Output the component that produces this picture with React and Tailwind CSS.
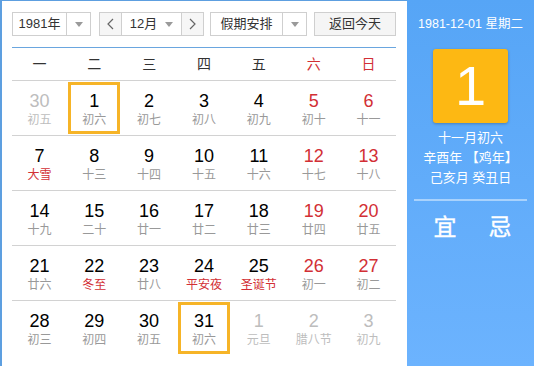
import React from 'react';

const weekdays = ['一', '二', '三', '四', '五', '六', '日'];

// o: 非本月, f: 节日/节气, s: 选中
const weeks = [
  [{ d: 30, l: '初五', o: true }, { d: 1, l: '初六', s: true }, { d: 2, l: '初七' }, { d: 3, l: '初八' }, { d: 4, l: '初九' }, { d: 5, l: '初十' }, { d: 6, l: '十一' }],
  [{ d: 7, l: '大雪', f: true }, { d: 8, l: '十三' }, { d: 9, l: '十四' }, { d: 10, l: '十五' }, { d: 11, l: '十六' }, { d: 12, l: '十七' }, { d: 13, l: '十八' }],
  [{ d: 14, l: '十九' }, { d: 15, l: '二十' }, { d: 16, l: '廿一' }, { d: 17, l: '廿二' }, { d: 18, l: '廿三' }, { d: 19, l: '廿四' }, { d: 20, l: '廿五' }],
  [{ d: 21, l: '廿六' }, { d: 22, l: '冬至', f: true }, { d: 23, l: '廿八' }, { d: 24, l: '平安夜', f: true }, { d: 25, l: '圣诞节', f: true }, { d: 26, l: '初一' }, { d: 27, l: '初二' }],
  [{ d: 28, l: '初三' }, { d: 29, l: '初四' }, { d: 30, l: '初五' }, { d: 31, l: '初六', s: true }, { d: 1, l: '元旦', o: true }, { d: 2, l: '腊八节', o: true }, { d: 3, l: '初九', o: true }],
];

const Caret = () => (
  <svg width="8" height="5" viewBox="0 0 8 5"><path d="M0 0h8L4 5z" fill="#9a9a9a" /></svg>
);

const Chevron = ({ dir }) => (
  <svg width="7" height="12" viewBox="0 0 7 12">
    <polyline points={dir === 'left' ? '6,1 1,6 6,11' : '1,1 6,6 1,11'} fill="none" stroke="#666" strokeWidth="1.2" />
  </svg>
);

export default function App() {
  return (
    <div className="flex w-[534px] h-[366px] overflow-hidden bg-white font-['Liberation_Sans','Noto_Sans_CJK_SC',sans-serif]">
      {/* 左侧日历 */}
      <div className="w-[407px] h-full border-l-2 border-t border-[#5d9fe0] pl-[10px] pr-[11px] pt-[11px]">
        <div className="flex items-center h-[24px] text-[13px] text-[#333]">
          <div className="flex h-full w-[79px] border border-[#cfcfcf] bg-white">
            <div className="flex-1 flex items-center justify-center">1981年</div>
            <div className="w-[24px] border-l border-[#cfcfcf] flex items-center justify-center"><Caret /></div>
          </div>
          <div className="flex h-full w-[105px] ml-[8px] border border-[#cfcfcf] bg-white">
            <div className="w-[22px] bg-[#f6f6f6] border-r border-[#cfcfcf] flex items-center justify-center"><Chevron dir="left" /></div>
            <div className="flex-1 flex items-center justify-center gap-[8px]">12月<Caret /></div>
            <div className="w-[22px] bg-[#f6f6f6] border-l border-[#cfcfcf] flex items-center justify-center"><Chevron dir="right" /></div>
          </div>
          <div className="flex h-full w-[97px] ml-[6px] border border-[#cfcfcf] bg-white">
            <div className="flex-1 flex items-center justify-center">假期安排</div>
            <div className="w-[24px] border-l border-[#cfcfcf] flex items-center justify-center"><Caret /></div>
          </div>
          <div className="h-full w-[82px] ml-auto border border-[#cfcfcf] bg-[#f5f5f5] flex items-center justify-center">返回今天</div>
        </div>

        <div className="mt-[11px] h-[1px] bg-[#6aa6df]" />

        <div className="grid grid-cols-7 h-[33px] border-b border-[#d2d2d2] text-[14px] items-center text-center">
          {weekdays.map((w, i) => (
            <div key={w} className={i >= 5 ? 'text-[#d22f35]' : 'text-[#333]'}>{w}</div>
          ))}
        </div>

        {weeks.map((week, r) => (
          <div key={r} className={`grid grid-cols-7 h-[55px] ${r < weeks.length - 1 ? 'border-b border-[#d2d2d2]' : ''}`}>
            {week.map((c, i) => {
              const weekend = i >= 5;
              const numColor = c.o ? 'text-[#bdbdbd]' : weekend ? 'text-[#d22f35]' : 'text-black';
              const lunColor = c.o ? 'text-[#bdbdbd]' : c.f ? 'text-[#d22f35]' : 'text-[#999]';
              return (
                <div key={i} className="flex justify-center">
                  <div className={`w-[52px] h-[52px] mt-[1px] border-[3px] pt-[6px] text-center ${c.s ? 'border-[#f6b427]' : 'border-transparent'}`}>
                    <div className={`text-[18px] leading-[20px] ${numColor}`}>{c.d}</div>
                    <div className={`text-[12px] leading-[18px] whitespace-nowrap ${lunColor}`}>{c.l}</div>
                  </div>
                </div>
              );
            })}
          </div>
        ))}
      </div>

      {/* 右侧详情 */}
      <div className="flex-1 h-full bg-gradient-to-b from-[#56a5f6] to-[#6cb3fe] flex flex-col items-center text-white">
        <div className="mt-[16px] text-[12.5px] leading-[16px] whitespace-nowrap">1981-12-01 星期二</div>
        <div className="mt-[17px] w-[75px] h-[74px] rounded-[3px] bg-[#fdb813] shadow-[0_1px_3px_rgba(0,0,0,0.25)] flex items-center justify-center text-[56px] leading-none">1</div>
        <div className="mt-[5px] text-[13px] leading-[20px] text-center">
          <div>十一月初六</div>
          <div>辛酉年 【鸡年】</div>
          <div>己亥月 癸丑日</div>
        </div>
        <div className="mt-[11px] w-[113px] h-[2px] bg-[#a9d2fc]" />
        <div className="mt-[13px] ml-[4px] flex gap-[32px] text-[23px] leading-[26px] [-webkit-text-stroke:0.4px_white]">
          <span>宜</span>
          <span>忌</span>
        </div>
      </div>
    </div>
  );
}
